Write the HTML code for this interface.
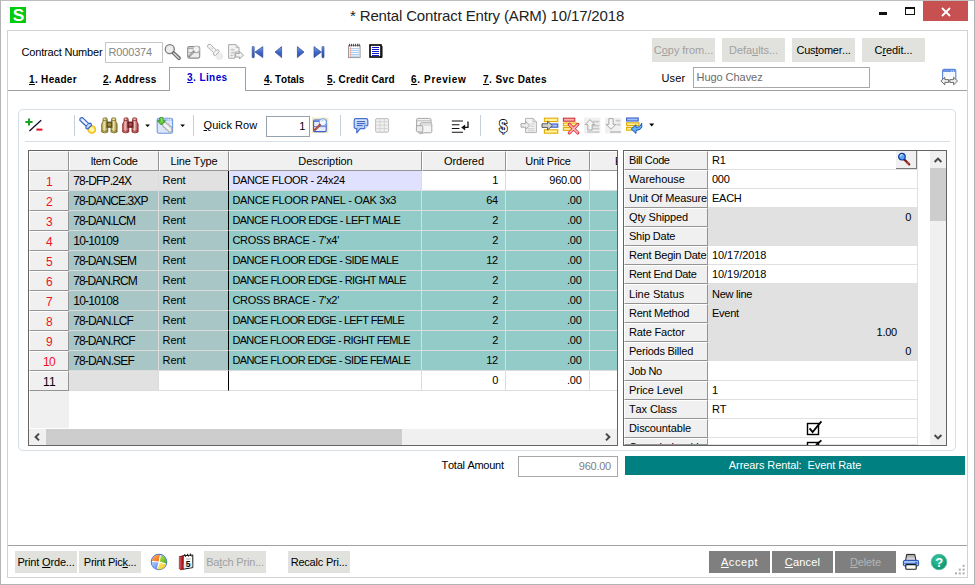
<!DOCTYPE html>
<html><head><meta charset="utf-8"><title>Rental Contract Entry</title>
<style>
*{box-sizing:border-box;margin:0;padding:0}
html,body{width:975px;height:585px;overflow:hidden;background:#fff}
body{font-family:"Liberation Sans",Arial,sans-serif;font-size:11px;letter-spacing:-0.25px;font-kerning:none;color:#000;position:relative}
.a{position:absolute}
.t{position:absolute;white-space:nowrap;line-height:14px;height:14px}
u{text-decoration:underline;text-underline-offset:1px}
#win{left:0;top:0;width:975px;height:585px;border:1px solid #b4b4b4;border-top-color:#bdbdbd}
#panel{left:7px;top:30px;width:961px;height:548px;border:1px solid #d2d2d2}
.btn{position:absolute;height:24px;background:#e1e2dd;text-align:center;line-height:25.5px;white-space:nowrap}
.dis{color:#a0a0a0}
.dbtn{position:absolute;height:22px;top:551px;background:#7f7f7f;color:#fff;text-align:center;line-height:23px}
.tab{position:absolute;top:73px;font-weight:bold;font-size:10px;white-space:nowrap;line-height:14px;letter-spacing:0.12px}
.inp{position:absolute;border:1px solid #c6c6c6;background:#fff;white-space:nowrap}
.hd{position:absolute;top:151px;height:20px;background:#f0f0f0;border-right:1px solid #949494;border-bottom:1px solid #949494;border-left:1px solid #fff;border-top:1px solid #fff;text-align:center;line-height:18px;white-space:nowrap;overflow:hidden}
.c{position:absolute;height:20px;border-right:1px solid #dcdcdc;border-bottom:1px solid #dcdcdc;line-height:19px;white-space:nowrap;overflow:hidden}
.rn{left:29px;width:40px;background:#f0f0f0;text-align:center;color:#f0101c;border-right:1px solid #949494;border-bottom:1px solid #949494;border-left:1px solid #fff;border-top:1px solid #fff;line-height:20px;font-size:12px;letter-spacing:-0.6px}
.ic{font-size:12px;line-height:20px}
.g1{background:#a9c6c6}.g2{background:#93cbc9}.gy{background:#e1e1e1}.lv{background:#e0e0ff}.w{background:#fff}
.r{text-align:right}
.pl{position:absolute;left:624px;width:84px;background:#f0f0f0;border-right:1px solid #949494;border-bottom:1px solid #949494;border-left:1px solid #fff;border-top:1px solid #fff;padding-left:4px;white-space:nowrap;overflow:hidden}
.pv{position:absolute;left:708px;width:210px;border-bottom:1px solid #e0e0e0;border-right:1px solid #e0e0e0;padding-left:4px;white-space:nowrap;overflow:hidden}
.vsep{position:absolute;top:115px;width:1px;height:21px;background:#c5d0da}
</style></head><body>
<div id="win" class="a"></div>
<!-- title bar -->
<div class="a" style="left:10px;top:7px;width:16px;height:16px;background:#00cb0c;color:#fff;font-weight:bold;font-size:16.5px;line-height:16.5px;text-align:center;overflow:hidden;letter-spacing:0;padding-left:1px"><span style="display:inline-block;transform:scaleX(1.05)">S</span></div>
<div class="t" id="title" style="left:350px;top:6px;font-size:15px;letter-spacing:-0.15px;line-height:20px;height:20px;color:#222">* Rental Contract Entry (ARM) 10/17/2018</div>
<div class="a" style="left:879px;top:12px;width:8px;height:3px;background:#111"></div>
<div class="a" style="left:905px;top:7px;width:10px;height:8px;border:1px solid #111;border-top-width:2px"></div>
<div class="a" style="left:923px;top:1px;width:45px;height:20px;background:#c75050"></div>
<svg class="a" style="left:941px;top:7px" width="10" height="10" viewBox="0 0 10 10"><path d="M1 1 L9 9 M9 1 L1 9" stroke="#fff" stroke-width="1.8" fill="none"/></svg>
<div id="panel" class="a"></div>

<div class="t" style="left:21.6px;top:45px"><span style="letter-spacing:-0.2px">Contract Number</span></div>
<div class="inp" style="left:105px;top:42px;width:58px;height:21px;color:#858585;line-height:19px;padding-left:2.5px"><span style="letter-spacing:-0.16px">R000374</span></div>
<div class="btn dis" style="left:652px;top:38px;width:63px"><span style="letter-spacing:-0.05px">C<u>o</u>py from...</span></div>
<div class="btn dis" style="left:722px;top:38px;width:63px"><span style="letter-spacing:-0.06px">Defa<u>u</u>lts...</span></div>
<div class="btn" style="left:792px;top:38px;width:63px"><span style="letter-spacing:-0.26px">Cus<u>t</u>omer...</span></div>
<div class="btn" style="left:862px;top:38px;width:63px"><span style="letter-spacing:-0.08px">C<u>r</u>edit...</span></div>
<div class="t" style="left:661.5px;top:71px"><span style="letter-spacing:0.13px">User</span></div>
<div class="inp" style="left:693px;top:67px;width:177px;height:21px;color:#6a6a6a;line-height:19px;padding-left:2.5px;border-color:#a8a8a8"><span style="letter-spacing:-0.05px">Hugo Chavez</span></div>

<div class="a" style="left:8px;top:90px;width:959px;height:1px;background:#a0a0a0"></div>
<div class="a" style="left:169px;top:67px;width:77px;height:24px;background:#fff;border:1px solid #a0a0a0;border-bottom:none"></div>
<div class="tab" style="left:29px"><span style="letter-spacing:0.32px"><u>1</u>. Header</span></div>
<div class="tab" style="left:103px"><span style="letter-spacing:0.25px"><u>2</u>. Address</span></div>
<div class="tab" style="left:187px;top:71px;color:#0000d0"><span style="letter-spacing:0.42px"><u>3</u>. Lines</span></div>
<div class="tab" style="left:264px"><span style="letter-spacing:-0.03px"><u>4</u>. Totals</span></div>
<div class="tab" style="left:327px"><span style="letter-spacing:0.16px"><u>5</u>. Credit Card</span></div>
<div class="tab" style="left:411px"><span style="letter-spacing:0.65px"><u>6</u>. Preview</span></div>
<div class="tab" style="left:483px"><span style="letter-spacing:0.43px"><u>7</u>. Svc Dates</span></div>

<div class="a" style="left:18px;top:109px;width:938px;height:342px;border:1px solid #d5dfe5;border-radius:5px"></div>
<div class="a" style="left:25px;top:141px;width:925px;height:1px;background:#d5dfe5"></div>
<div class="vsep" style="left:74px"></div><div class="vsep" style="left:193px"></div><div class="vsep" style="left:340px"></div><div class="vsep" style="left:480px"></div>
<div class="t" style="left:203.6px;top:118px"><span style="letter-spacing:0.04px"><u>Q</u>uick Row</span></div>
<div class="inp" style="left:266px;top:116px;width:44px;height:21px;line-height:19px;text-align:right;padding-right:4px;border-color:#98a2ad">1</div>

<div class="a" style="left:28px;top:150px;width:590px;height:296px;border:1px solid #646464;background:#fff"></div>
<div class="a" style="left:29px;top:151px;width:40px;height:277px;background:#f0f0f0;border-left:1px solid #fff"></div>
<div class="hd" style="left:29px;width:40px"></div>
<div class="hd" style="left:69px;width:90px"><span style="letter-spacing:-0.41px">Item Code</span></div>
<div class="hd" style="left:159px;width:70px"><span style="letter-spacing:-0.13px">Line Type</span></div>
<div class="hd" style="left:229px;width:193px"><span style="letter-spacing:-0.07px">Description</span></div>
<div class="hd" style="left:422px;width:84px"><span style="letter-spacing:-0.04px">Ordered</span></div>
<div class="hd" style="left:506px;width:84px"><span style="letter-spacing:-0.21px">Unit Price</span></div>
<div class="hd" style="left:590px;width:27px;border-right:none;text-align:left;padding-left:24px">E</div>
<div class="c rn" style="top:171px">1</div>
<div class="c ic gy" style="top:171px;left:69px;width:90px;padding-left:4.2px"><span style="letter-spacing:-0.8px">78-DFP.24X</span></div>
<div class="c gy" style="top:171px;left:159px;width:70px;padding-left:3.6px;border-right-color:#000"><span style="letter-spacing:-0.08px">Rent</span></div>
<div class="c lv" style="top:171px;left:229px;width:193px;padding-left:3.4px"><span style="letter-spacing:-0.36px">DANCE FLOOR - 24x24</span></div>
<div class="c w r" style="top:171px;left:422px;width:84px;padding-right:7px">1</div>
<div class="c w r" style="top:171px;left:506px;width:84px;padding-right:7.5px">960.00</div>
<div class="c w" style="top:171px;left:590px;width:27px;border-right:none"></div>
<div class="c rn" style="top:191px">2</div>
<div class="c ic g1" style="top:191px;left:69px;width:90px;padding-left:4.2px"><span style="letter-spacing:-0.92px">78-DANCE.3XP</span></div>
<div class="c g1" style="top:191px;left:159px;width:70px;padding-left:3.6px;border-right-color:#000"><span style="letter-spacing:-0.08px">Rent</span></div>
<div class="c g2" style="top:191px;left:229px;width:193px;padding-left:3.4px"><span style="letter-spacing:-0.32px">DANCE FLOOR PANEL - OAK 3x3</span></div>
<div class="c g2 r" style="top:191px;left:422px;width:84px;padding-right:7px">64</div>
<div class="c g2 r" style="top:191px;left:506px;width:84px;padding-right:7.5px">.00</div>
<div class="c g2" style="top:191px;left:590px;width:27px;border-right:none"></div>
<div class="c rn" style="top:211px">3</div>
<div class="c ic g1" style="top:211px;left:69px;width:90px;padding-left:4.2px"><span style="letter-spacing:-0.95px">78-DAN.LCM</span></div>
<div class="c g1" style="top:211px;left:159px;width:70px;padding-left:3.6px;border-right-color:#000"><span style="letter-spacing:-0.08px">Rent</span></div>
<div class="c g2" style="top:211px;left:229px;width:193px;padding-left:3.4px"><span style="letter-spacing:-0.55px">DANCE FLOOR EDGE - LEFT MALE</span></div>
<div class="c g2 r" style="top:211px;left:422px;width:84px;padding-right:7px">2</div>
<div class="c g2 r" style="top:211px;left:506px;width:84px;padding-right:7.5px">.00</div>
<div class="c g2" style="top:211px;left:590px;width:27px;border-right:none"></div>
<div class="c rn" style="top:231px">4</div>
<div class="c ic g1" style="top:231px;left:69px;width:90px;padding-left:4.2px"><span style="letter-spacing:-0.72px">10-10109</span></div>
<div class="c g1" style="top:231px;left:159px;width:70px;padding-left:3.6px;border-right-color:#000"><span style="letter-spacing:-0.08px">Rent</span></div>
<div class="c g2" style="top:231px;left:229px;width:193px;padding-left:3.4px"><span style="letter-spacing:-0.27px">CROSS BRACE - 7'x4'</span></div>
<div class="c g2 r" style="top:231px;left:422px;width:84px;padding-right:7px">2</div>
<div class="c g2 r" style="top:231px;left:506px;width:84px;padding-right:7.5px">.00</div>
<div class="c g2" style="top:231px;left:590px;width:27px;border-right:none"></div>
<div class="c rn" style="top:251px">5</div>
<div class="c ic g1" style="top:251px;left:69px;width:90px;padding-left:4.2px"><span style="letter-spacing:-0.92px">78-DAN.SEM</span></div>
<div class="c g1" style="top:251px;left:159px;width:70px;padding-left:3.6px;border-right-color:#000"><span style="letter-spacing:-0.08px">Rent</span></div>
<div class="c g2" style="top:251px;left:229px;width:193px;padding-left:3.4px"><span style="letter-spacing:-0.58px">DANCE FLOOR EDGE - SIDE MALE</span></div>
<div class="c g2 r" style="top:251px;left:422px;width:84px;padding-right:7px">12</div>
<div class="c g2 r" style="top:251px;left:506px;width:84px;padding-right:7.5px">.00</div>
<div class="c g2" style="top:251px;left:590px;width:27px;border-right:none"></div>
<div class="c rn" style="top:271px">6</div>
<div class="c ic g1" style="top:271px;left:69px;width:90px;padding-left:4.2px"><span style="letter-spacing:-0.98px">78-DAN.RCM</span></div>
<div class="c g1" style="top:271px;left:159px;width:70px;padding-left:3.6px;border-right-color:#000"><span style="letter-spacing:-0.08px">Rent</span></div>
<div class="c g2" style="top:271px;left:229px;width:193px;padding-left:3.4px"><span style="letter-spacing:-0.59px">DANCE FLOOR EDGE - RIGHT MALE</span></div>
<div class="c g2 r" style="top:271px;left:422px;width:84px;padding-right:7px">2</div>
<div class="c g2 r" style="top:271px;left:506px;width:84px;padding-right:7.5px">.00</div>
<div class="c g2" style="top:271px;left:590px;width:27px;border-right:none"></div>
<div class="c rn" style="top:291px">7</div>
<div class="c ic g1" style="top:291px;left:69px;width:90px;padding-left:4.2px"><span style="letter-spacing:-0.72px">10-10108</span></div>
<div class="c g1" style="top:291px;left:159px;width:70px;padding-left:3.6px;border-right-color:#000"><span style="letter-spacing:-0.08px">Rent</span></div>
<div class="c g2" style="top:291px;left:229px;width:193px;padding-left:3.4px"><span style="letter-spacing:-0.27px">CROSS BRACE - 7'x2'</span></div>
<div class="c g2 r" style="top:291px;left:422px;width:84px;padding-right:7px">2</div>
<div class="c g2 r" style="top:291px;left:506px;width:84px;padding-right:7.5px">.00</div>
<div class="c g2" style="top:291px;left:590px;width:27px;border-right:none"></div>
<div class="c rn" style="top:311px">8</div>
<div class="c ic g1" style="top:311px;left:69px;width:90px;padding-left:4.2px"><span style="letter-spacing:-0.88px">78-DAN.LCF</span></div>
<div class="c g1" style="top:311px;left:159px;width:70px;padding-left:3.6px;border-right-color:#000"><span style="letter-spacing:-0.08px">Rent</span></div>
<div class="c g2" style="top:311px;left:229px;width:193px;padding-left:3.4px"><span style="letter-spacing:-0.63px">DANCE FLOOR EDGE - LEFT FEMLE</span></div>
<div class="c g2 r" style="top:311px;left:422px;width:84px;padding-right:7px">2</div>
<div class="c g2 r" style="top:311px;left:506px;width:84px;padding-right:7.5px">.00</div>
<div class="c g2" style="top:311px;left:590px;width:27px;border-right:none"></div>
<div class="c rn" style="top:331px">9</div>
<div class="c ic g1" style="top:331px;left:69px;width:90px;padding-left:4.2px"><span style="letter-spacing:-0.93px">78-DAN.RCF</span></div>
<div class="c g1" style="top:331px;left:159px;width:70px;padding-left:3.6px;border-right-color:#000"><span style="letter-spacing:-0.08px">Rent</span></div>
<div class="c g2" style="top:331px;left:229px;width:193px;padding-left:3.4px"><span style="letter-spacing:-0.66px">DANCE FLOOR EDGE - RIGHT FEMLE</span></div>
<div class="c g2 r" style="top:331px;left:422px;width:84px;padding-right:7px">2</div>
<div class="c g2 r" style="top:331px;left:506px;width:84px;padding-right:7.5px">.00</div>
<div class="c g2" style="top:331px;left:590px;width:27px;border-right:none"></div>
<div class="c rn" style="top:351px">10</div>
<div class="c ic g1" style="top:351px;left:69px;width:90px;padding-left:4.2px"><span style="letter-spacing:-0.87px">78-DAN.SEF</span></div>
<div class="c g1" style="top:351px;left:159px;width:70px;padding-left:3.6px;border-right-color:#000"><span style="letter-spacing:-0.08px">Rent</span></div>
<div class="c g2" style="top:351px;left:229px;width:193px;padding-left:3.4px"><span style="letter-spacing:-0.61px">DANCE FLOOR EDGE - SIDE FEMALE</span></div>
<div class="c g2 r" style="top:351px;left:422px;width:84px;padding-right:7px">12</div>
<div class="c g2 r" style="top:351px;left:506px;width:84px;padding-right:7.5px">.00</div>
<div class="c g2" style="top:351px;left:590px;width:27px;border-right:none"></div>
<div class="c rn" style="top:371px;color:#000">11</div>
<div class="c ic gy" style="top:371px;left:69px;width:90px;padding-left:4.2px"></div>
<div class="c w" style="top:371px;left:159px;width:70px;padding-left:3.6px;border-right-color:#000"></div>
<div class="c w" style="top:371px;left:229px;width:193px;padding-left:3.4px"></div>
<div class="c w r" style="top:371px;left:422px;width:84px;padding-right:7px">0</div>
<div class="c w r" style="top:371px;left:506px;width:84px;padding-right:7.5px">.00</div>
<div class="c w" style="top:371px;left:590px;width:27px;border-right:none"></div>
<div class="a" style="left:29px;top:429px;width:588px;height:16px;background:#f0f0f0"></div>
<div class="a" style="left:46px;top:429px;width:356px;height:16px;background:#cdcdcd"></div>
<svg class="a" style="left:33px;top:432px" width="8" height="10" viewBox="0 0 8 10"><path d="M6 1.6 L2.6 5 L6 8.4" stroke="#484848" stroke-width="2" fill="none"/></svg>
<svg class="a" style="left:604px;top:432px" width="8" height="10" viewBox="0 0 8 10"><path d="M2 1.6 L5.4 5 L2 8.4" stroke="#484848" stroke-width="2" fill="none"/></svg>

<div class="a" style="left:623px;top:150px;width:324px;height:296px;border:1px solid #646464;background:#fff"></div>
<div class="pl" style="top:151px;height:19px;line-height:17px"><span style="letter-spacing:-0.38px">Bill Code</span></div>
<div class="pv w" style="top:151px;height:19px;line-height:19px;">R1</div>
<div class="pl" style="top:170px;height:19px;line-height:17px"><span style="letter-spacing:-0.04px">Warehouse</span></div>
<div class="pv w" style="top:170px;height:19px;line-height:19px;">000</div>
<div class="pl" style="top:189px;height:19px;line-height:17px"><span style="letter-spacing:-0.14px">Unit Of Measure</span></div>
<div class="pv w" style="top:189px;height:19px;line-height:19px;">EACH</div>
<div class="pl" style="top:208px;height:19px;line-height:17px"><span style="letter-spacing:-0.15px">Qty Shipped</span></div>
<div class="pv gy" style="top:208px;height:19px;line-height:19px;text-align:right;padding-right:6px;">0</div>
<div class="pl" style="top:227px;height:19px;line-height:17px"><span style="letter-spacing:-0.25px">Ship Date</span></div>
<div class="pv gy" style="top:227px;height:19px;line-height:19px;"></div>
<div class="pl" style="top:246px;height:19px;line-height:17px"><span style="letter-spacing:-0.23px">Rent Begin Date</span></div>
<div class="pv w" style="top:246px;height:19px;line-height:19px;"><span style="letter-spacing:-0.07px">10/17/2018</span></div>
<div class="pl" style="top:265px;height:19px;line-height:17px"><span style="letter-spacing:-0.36px">Rent End Date</span></div>
<div class="pv w" style="top:265px;height:19px;line-height:19px;"><span style="letter-spacing:-0.07px">10/19/2018</span></div>
<div class="pl" style="top:284px;height:20px;line-height:18px"><span style="letter-spacing:0.01px">Line Status</span></div>
<div class="pv gy" style="top:284px;height:20px;line-height:20px;">New line</div>
<div class="pl" style="top:304px;height:19px;line-height:17px"><span style="letter-spacing:-0.26px">Rent Method</span></div>
<div class="pv gy" style="top:304px;height:19px;line-height:19px;">Event</div>
<div class="pl" style="top:323px;height:19px;line-height:17px"><span style="letter-spacing:-0.16px">Rate Factor</span></div>
<div class="pv gy" style="top:323px;height:19px;line-height:19px;text-align:right;padding-right:20px;">1.00</div>
<div class="pl" style="top:342px;height:19px;line-height:17px"><span style="letter-spacing:-0.23px">Periods Billed</span></div>
<div class="pv gy" style="top:342px;height:19px;line-height:19px;text-align:right;padding-right:6px;">0</div>
<div class="pl" style="top:361px;height:20px;line-height:18px"><span style="letter-spacing:-0.35px">Job No</span></div>
<div class="pv w" style="top:361px;height:20px;line-height:20px;"></div>
<div class="pl" style="top:381px;height:19px;line-height:17px"><span style="letter-spacing:-0.06px">Price Level</span></div>
<div class="pv w" style="top:381px;height:19px;line-height:19px;">1</div>
<div class="pl" style="top:400px;height:19px;line-height:17px"><span style="letter-spacing:-0.12px">Tax Class</span></div>
<div class="pv w" style="top:400px;height:19px;line-height:19px;">RT</div>
<div class="pl" style="top:419px;height:19px;line-height:17px"><span style="letter-spacing:-0.13px">Discountable</span></div>
<div class="pv w" style="top:419px;height:19px;line-height:19px;"></div>
<div class="pl" style="top:438px;height:7px;line-height:17px"><span style="letter-spacing:-0.46px">Commissionable</span></div>
<div class="pv w" style="top:438px;height:7px;line-height:19px;"></div>
<div class="a" style="left:930px;top:151px;width:16px;height:294px;background:#f0f0f0"></div>
<div class="a" style="left:930px;top:168px;width:16px;height:53px;background:#cdcdcd"></div>
<svg class="a" style="left:933px;top:156px" width="10" height="8" viewBox="0 0 10 8"><path d="M1.6 6 L5 2.6 L8.4 6" stroke="#484848" stroke-width="2" fill="none"/></svg>
<svg class="a" style="left:933px;top:433px" width="10" height="8" viewBox="0 0 10 8"><path d="M1.6 2 L5 5.4 L8.4 2" stroke="#484848" stroke-width="2" fill="none"/></svg>

<div class="t" style="left:441.6px;top:458px"><span style="letter-spacing:-0.28px">Total Amount</span></div>
<div class="inp" style="left:518px;top:456px;width:100px;height:21px;line-height:19px;text-align:right;padding-right:6px;color:#808080;border-color:#a8a8a8">960.00</div>
<div class="a" style="left:625px;top:456px;width:340px;height:19px;background:#008080;color:#fff;text-align:center;line-height:19px;white-space:pre"><span style="letter-spacing:-0.08px">Arrears Rental:  Event Rate</span></div>

<div class="a" style="left:8px;top:545px;width:959px;height:1px;background:#a0a0a0"></div>
<div class="btn" style="left:15px;top:551px;width:62px;height:22px;line-height:23px"><span style="letter-spacing:-0.17px">Print <u>O</u>rde...</span></div>
<div class="btn" style="left:79px;top:551px;width:62px;height:22px;line-height:23px"><span style="letter-spacing:-0.25px">Print Pic<u>k</u>...</span></div>
<div class="btn dis" style="left:204px;top:551px;width:62px;height:22px;line-height:23px"><span style="letter-spacing:-0.18px">Ba<u>t</u>ch Prin...</span></div>
<div class="btn" style="left:288px;top:551px;width:62px;height:22px;line-height:23px"><span style="letter-spacing:-0.2px">Recalc Pri...</span></div>
<div class="dbtn" style="left:709px;width:61px"><span style="letter-spacing:0.59px"><u>A</u>ccept</span></div>
<div class="dbtn" style="left:772px;width:61px"><span style="letter-spacing:0.19px"><u>C</u>ancel</span></div>
<div class="dbtn" style="left:835px;width:61px;color:#b4b4b4"><span style="letter-spacing:-0.16px"><u>D</u>elete</span></div>

<!-- header toolbar icons -->
<svg class="a" style="left:164px;top:43px" width="18" height="18" viewBox="0 0 18 18">
<circle cx="5.8" cy="6.2" r="4.5" fill="#ededed" stroke="#7c7c7c" stroke-width="1.3"/>
<path d="M9.6 10 L15 15.2" stroke="#686868" stroke-width="3.8" stroke-linecap="round"/>
<path d="M9.8 10.2 L15 15.2" stroke="#d4d4d4" stroke-width="1.5" stroke-linecap="round"/>
</svg>
<svg class="a" style="left:186px;top:44px" width="16" height="16" viewBox="0 0 16 16">
<rect x="1.7" y="2.5" width="12" height="11.6" rx="1.6" fill="#ececec" stroke="#8a8a8a" stroke-width="1.1"/>
<path d="M2 4.2 H8" stroke="#8a8a8a" stroke-width="1"/>
<circle cx="10.3" cy="5.2" r="3.3" fill="#f2f2f2" stroke="#b0b0b0" stroke-width="0.9"/>
<path d="M2.5 8.6 H13.5" stroke="#a8a8a8" stroke-width="0.9"/>
<path d="M7.6 7.8 L3.2 12.4" stroke="#808080" stroke-width="2" stroke-linecap="round"/>
<path d="M7.6 7.8 L3.4 12.2" stroke="#e4e4e4" stroke-width="0.7"/>
</svg>
<svg class="a" style="left:206px;top:43px" width="19" height="19" viewBox="0 0 19 19">
<circle cx="13.4" cy="13.2" r="3.8" fill="#ececec"/>
<path d="M1.5 4 Q1 1 4.2 1.2 L10.2 7 L12.6 7 L13.2 8.8 L9.4 12.6 L7.6 12 L7.6 9.6 Z" fill="#f6f6f6" stroke="#b0b0b0" stroke-width="1" stroke-linejoin="round"/>
<path d="M10.4 7 L7.6 9.8" stroke="#b0b0b0" stroke-width="0.9"/>
<path d="M5 4.4 L7 6.4" stroke="#b8b8b8" stroke-width="0.9"/>
</svg>
<svg class="a" style="left:227px;top:43px" width="18" height="18" viewBox="0 0 18 18">
<path d="M1.6 1.6 H9 L12 4.6 V9 H8 V15.2 H1.6 Z" fill="#f3f3f3" stroke="#a8a8a8" stroke-width="1"/>
<path d="M9 1.6 V4.6 H12" fill="none" stroke="#b8b8b8" stroke-width="0.9"/>
<path d="M3.4 6.8 H8 M3.4 9.6 H7 M3.4 12.4 H6.6 M5.2 5.6 V8 M6.2 8.6 V10.8 M4.6 11.2 V13.4" stroke="#c2c2c2" stroke-width="0.9"/>
<path d="M8.6 10.4 H12.6 V8.4 L16.4 12.2 L12.6 16 V14 H8.6 Z" fill="#f0f0f0" stroke="#a4a4a4" stroke-width="1" stroke-linejoin="round"/>
</svg>
<svg class="a" style="left:250px;top:44px" width="78" height="16" viewBox="0 0 78 16">
<defs><linearGradient id="nb" x1="0" y1="0" x2="0" y2="1"><stop offset="0" stop-color="#8aa6e4"/><stop offset="0.5" stop-color="#3f68c6"/><stop offset="1" stop-color="#2d4fa8"/></linearGradient></defs>
<g fill="url(#nb)" stroke="#2c4a9c" stroke-width="0.7" stroke-linejoin="round">
<rect x="2.2" y="2.4" width="2" height="11.4" rx="0.8"/>
<path d="M12.8 2.6 V13.6 L5 8.1 Z"/>
<path d="M31.6 2.6 V13.6 L25 8.1 Z"/>
<path d="M47.4 2.6 V13.6 L54 8.1 Z"/>
<path d="M64 2.6 V13.6 L71.4 8.1 Z"/>
<rect x="72" y="2.4" width="2" height="11.4" rx="0.8"/>
</g></svg>
<svg class="a" style="left:347px;top:43px" width="16" height="16" viewBox="0 0 16 16">
<rect x="1.5" y="2.6" width="11.6" height="12" fill="#fdfdfd" stroke="#9a9a9a" stroke-width="1"/>
<path d="M2.6 0.8 V3.4 M4.6 0.8 V3.4 M6.6 0.8 V3.4 M8.6 0.8 V3.4 M10.6 0.8 V3.4 M12.2 0.8 V3.4" stroke="#303030" stroke-width="0.9"/>
<path d="M2.4 5.6 H12.4 M2.4 7.6 H12.4 M2.4 9.6 H12.4 M2.4 11.6 H12.4 M2.4 13.2 H12.4" stroke="#9cc4ea" stroke-width="0.9"/>
<path d="M3.6 4 V14" stroke="#f0a090" stroke-width="0.8"/>
</svg>
<svg class="a" style="left:368px;top:43px" width="16" height="16" viewBox="0 0 16 16">
<rect x="2" y="2" width="11" height="12" fill="#fff" stroke="#000" stroke-width="1.6"/>
<path d="M12.4 14.4 H14 V3" stroke="#000" stroke-width="1" fill="none"/>
<path d="M4 4.5 H11 M4 6.5 H11 M4 8.5 H11 M4 10.5 H11 M4 12.5 H11" stroke="#1418c8" stroke-width="1" shape-rendering="crispEdges"/>
</svg>
<!-- top right window icon -->
<svg class="a" style="left:940px;top:68px" width="18" height="18" viewBox="0 0 18 18">
<rect x="2.6" y="1.4" width="13.2" height="11" rx="1.4" fill="#f2f6fd" stroke="#5c86dc" stroke-width="1.1"/>
<path d="M3 1.9 H15.4 V4 H3 Z" fill="#6c94e4"/>
<rect x="11.2" y="2.5" width="1" height="0.9" fill="#fff"/><rect x="13" y="2.5" width="1" height="0.9" fill="#fff"/>
<rect x="3.4" y="8.6" width="11.6" height="6" fill="#fff"/>
<path d="M0.9 13 L4.8 9.2 V11.6 H8.6 V14.4 H4.8 V16.8 Z" fill="#f0f0f0" stroke="#5c5c5c" stroke-width="0.9" stroke-linejoin="round"/>
<path d="M17.5 13 L13.6 9.2 V11.6 H9.8 V14.4 H13.6 V16.8 Z" fill="#f0f0f0" stroke="#5c5c5c" stroke-width="0.9" stroke-linejoin="round"/>
</svg>
<!-- line toolbar icons -->
<svg class="a" style="left:24px;top:116px" width="20" height="18" viewBox="0 0 20 18">
<path d="M17.2 4.2 L5.4 15" stroke="#101030" stroke-width="1.3"/>
<path d="M1.4 6 H8.6 M5 2.4 V9.6" stroke="#18a020" stroke-width="2"/>
<path d="M12.4 13.6 H18.4" stroke="#e01020" stroke-width="2"/>
</svg>
<svg class="a" style="left:79px;top:116px" width="19" height="19" viewBox="0 0 19 19">
<defs><radialGradient id="yg"><stop offset="0" stop-color="#ffffe8"/><stop offset="0.55" stop-color="#fff080"/><stop offset="1" stop-color="#f8c010"/></radialGradient>
<linearGradient id="fb" x1="0" y1="1" x2="1" y2="0"><stop offset="0" stop-color="#6890dc"/><stop offset="0.5" stop-color="#d0e0fc"/><stop offset="1" stop-color="#7ca0e4"/></linearGradient></defs>
<circle cx="12.8" cy="13.5" r="3.8" fill="url(#yg)" stroke="#f0b818" stroke-width="1.1"/>
<path d="M0.9 4.4 Q0.4 1.4 3.6 1.6 L9.6 7.4 L12 7.4 L12.6 9.2 L8.8 13 L7 12.4 L7 10 Z" fill="url(#fb)" stroke="#3562c0" stroke-width="1.1" stroke-linejoin="round"/>
<path d="M9.8 7.4 L7 10.2" stroke="#3562c0" stroke-width="1"/>
<path d="M3.2 3.8 L7.2 7.8" stroke="#f4f8ff" stroke-width="1.3" stroke-linecap="round"/>
</svg>
<svg class="a" style="left:101px;top:117px" width="17" height="17" viewBox="0 0 17 17">
<defs><linearGradient id="ob" x1="0" y1="0" x2="1" y2="0"><stop offset="0" stop-color="#a89838"/><stop offset="0.4" stop-color="#f0e8b0"/><stop offset="1" stop-color="#8a7c2c"/></linearGradient></defs>
<path d="M2 2.2 Q2 0.9 3.2 0.9 H5 Q6.2 0.9 6.2 2.2 V4 L6.8 5.4 V15 Q3.8 16.8 0.7 15 V7 L2 4.4 Z" fill="url(#ob)" stroke="#7c7028" stroke-width="0.9" stroke-linejoin="round"/>
<path d="M14.8 2.2 Q14.8 0.9 13.6 0.9 H11.8 Q10.6 0.9 10.6 2.2 V4 L10 5.4 V15 Q13 16.8 16.1 15 V7 L14.8 4.4 Z" fill="url(#ob)" stroke="#7c7028" stroke-width="0.9" stroke-linejoin="round"/>
<rect x="5.4" y="4.6" width="6" height="6.2" fill="#5e5420"/>
<rect x="6.8" y="6" width="3.2" height="3.2" rx="1" fill="#9a8e44"/>
<path d="M2 3.6 H6.2 M10.6 3.6 H14.8 M0.9 13.6 Q3.8 15.2 6.6 13.6 M10.2 13.6 Q13 15.2 15.9 13.6" stroke="#7c7028" stroke-width="0.8" fill="none"/>
</svg>
<svg class="a" style="left:122px;top:117px" width="17" height="17" viewBox="0 0 17 17">
<defs><linearGradient id="rb" x1="0" y1="0" x2="1" y2="0"><stop offset="0" stop-color="#b04444"/><stop offset="0.4" stop-color="#f4c0c0"/><stop offset="1" stop-color="#943030"/></linearGradient></defs>
<path d="M2 2.2 Q2 0.9 3.2 0.9 H5 Q6.2 0.9 6.2 2.2 V4 L6.8 5.4 V15 Q3.8 16.8 0.7 15 V7 L2 4.4 Z" fill="url(#rb)" stroke="#8c2c2c" stroke-width="0.9" stroke-linejoin="round"/>
<path d="M14.8 2.2 Q14.8 0.9 13.6 0.9 H11.8 Q10.6 0.9 10.6 2.2 V4 L10 5.4 V15 Q13 16.8 16.1 15 V7 L14.8 4.4 Z" fill="url(#rb)" stroke="#8c2c2c" stroke-width="0.9" stroke-linejoin="round"/>
<rect x="5.4" y="4.6" width="6" height="6.2" fill="#6a2020"/>
<rect x="6.8" y="6" width="3.2" height="3.2" rx="1" fill="#a84c4c"/>
<path d="M2 3.6 H6.2 M10.6 3.6 H14.8 M0.9 13.6 Q3.8 15.2 6.6 13.6 M10.2 13.6 Q13 15.2 15.9 13.6" stroke="#8c2c2c" stroke-width="0.8" fill="none"/>
</svg>
<svg class="a" style="left:145px;top:124px" width="6" height="4" viewBox="0 0 6 4"><path d="M0.2 0.4 H5 L2.6 3 Z" fill="#000"/></svg>
<svg class="a" style="left:180px;top:124px" width="6" height="4" viewBox="0 0 6 4"><path d="M0.2 0.4 H5 L2.6 3 Z" fill="#000"/></svg>
<svg class="a" style="left:649px;top:123px" width="6" height="5" viewBox="0 0 6 5"><path d="M0.2 0.6 H5.2 L2.7 3.6 Z" fill="#000"/></svg>
<svg class="a" style="left:156px;top:117px" width="18" height="17" viewBox="0 0 18 17">
<rect x="1.2" y="1.2" width="15.4" height="15" rx="1.8" fill="#dbe6f8" stroke="#6e98e0" stroke-width="1.1"/>
<path d="M1.8 1.8 H16 V4 H1.8 Z" fill="#a8c4f0"/>
<rect x="11.6" y="2.4" width="1.2" height="1.1" fill="#fff"/><rect x="13.8" y="2.4" width="1.2" height="1.1" fill="#fff"/>
<path d="M7.4 5.4 L9.6 5 L11 7.2 L12.6 7 L13.6 9.4 L15.2 9.4 L16 12 L16 14 L13.6 15.8 L11.6 13 L10.2 13 L9 10.6 L7.6 10.4 L6.2 7.6 Z" fill="#e4e4e4" stroke="#9c9c9c" stroke-width="0.9" stroke-linejoin="round"/>
<path d="M8.4 7 L14.4 13.6" stroke="#fafafa" stroke-width="1.4"/>
<path d="M3.8 0.7 H7 V3.8 H9.4 L5.4 8 L1.4 3.8 H3.8 Z" fill="#62cc3c" stroke="#2c8c1c" stroke-width="0.9" stroke-linejoin="round"/>
<path d="M4.6 1.6 H6 V4.6" stroke="#b8f0a0" stroke-width="0.8" fill="none"/>
</svg>
<svg class="a" style="left:312px;top:117px" width="17" height="17" viewBox="0 0 17 17">
<rect x="0" y="0.6" width="16.4" height="15.6" fill="#efe6c4"/>
<rect x="1.6" y="3" width="12.6" height="11.6" rx="1.2" fill="#e6ecfb" stroke="#3c60c8" stroke-width="1.1"/>
<path d="M2 3.4 H13.8 V5 H2 Z" fill="#5c80dc"/>
<path d="M2 9.6 H14" stroke="#5c7cd4" stroke-width="0.9"/>
<circle cx="10.8" cy="5.2" r="3.5" fill="#f2f8ff" stroke="#78a8e8" stroke-width="1.1"/>
<path d="M9.4 4.4 Q10 3 11.6 3.2" stroke="#a8ccf4" stroke-width="1" fill="none"/>
<path d="M7.8 8 L3 12.8" stroke="#a03424" stroke-width="2.2" stroke-linecap="round"/>
<path d="M7.4 8.2 L3.2 12.4" stroke="#e8a090" stroke-width="0.7"/>
</svg>
<svg class="a" style="left:353px;top:117px" width="17" height="18" viewBox="0 0 17 18">
<defs><linearGradient id="cb" x1="0" y1="0" x2="0" y2="1"><stop offset="0" stop-color="#dce8fc"/><stop offset="1" stop-color="#a8c4f4"/></linearGradient></defs>
<path d="M3 1.6 H13 Q14.8 1.6 14.8 3.4 V8.2 L11.4 11.6 H7.2 L3.8 15.8 V11.6 H3 Q1.2 11.6 1.2 9.8 V3.4 Q1.2 1.6 3 1.6 Z" fill="url(#cb)" stroke="#4470cc" stroke-width="1.2" stroke-linejoin="round"/>
<path d="M14.6 8.4 H11.6 V11.4" fill="#f0f5fd" stroke="#4470cc" stroke-width="0.9"/>
<path d="M3.8 4.6 H12.2 M3.8 6.6 H12.2 M3.8 8.6 H9.6" stroke="#3860bc" stroke-width="1"/>
</svg>
<svg class="a" style="left:374px;top:117px" width="17" height="17" viewBox="0 0 17 17">
<rect x="1.6" y="1.6" width="13" height="13.6" rx="1.4" fill="#f1f1f1" stroke="#bcbcbc" stroke-width="1"/>
<path d="M1.6 4.8 H14.6 M1.6 8.2 H14.6 M1.6 11.6 H14.6 M6 1.6 V15 M10.4 1.6 V15" stroke="#d0d0d0" stroke-width="0.9"/>
</svg>
<svg class="a" style="left:415px;top:117px" width="18" height="18" viewBox="0 0 18 18">
<rect x="1.6" y="1.4" width="14.4" height="11" rx="1.4" fill="#f2f2f2" stroke="#a6a6a6" stroke-width="1"/>
<path d="M2 3.8 H16" stroke="#bcbcbc" stroke-width="1"/>
<rect x="5.4" y="5.8" width="11.4" height="10" rx="1.4" fill="#f4f4f4" stroke="#a6a6a6" stroke-width="1"/>
<path d="M6 8 H16.4" stroke="#c4c4c4" stroke-width="0.9"/>
<rect x="1.4" y="8.6" width="6.4" height="6.4" rx="1.6" fill="#ececec" stroke="#a6a6a6" stroke-width="1"/>
<path d="M4 15 V16.6 H8" stroke="#b0b0b0" stroke-width="0.9" fill="none"/>
</svg>
<svg class="a" style="left:451px;top:118px" width="19" height="16" viewBox="0 0 19 16">
<path d="M0.8 3 H12 M0.8 6.8 H8.4 M0.8 10.5 H8.4 M0.8 14.2 H12" stroke="#111" stroke-width="1.1"/>
<path d="M17 3.6 V9.4 H13" stroke="#111" stroke-width="1.3" fill="none"/>
<path d="M10.2 9.4 L14.2 6.4 V12.4 Z" fill="#111"/>
</svg>
<svg class="a" style="left:495px;top:115px" width="16" height="22" viewBox="0 0 16 22">
<g transform="translate(8.2 0) scale(0.84 1)">
<text x="0" y="17.2" text-anchor="middle" font-family="Liberation Sans, sans-serif" font-size="17" font-weight="bold" fill="#111" stroke="#111" stroke-width="1.9" stroke-linejoin="round" letter-spacing="0">$</text>
<text x="0" y="17.2" text-anchor="middle" font-family="Liberation Sans, sans-serif" font-size="17" font-weight="bold" fill="#fff" letter-spacing="0">$</text>
</g></svg>
<svg class="a" style="left:520px;top:117px" width="18" height="17" viewBox="0 0 18 17">
<path d="M5.6 1.4 H13 L16.4 4.8 V15.6 H5.6 Z" fill="#f4f4f4" stroke="#b4b4b4" stroke-width="1"/>
<path d="M13 1.4 V4.8 H16.4" fill="none" stroke="#b4b4b4" stroke-width="0.9"/>
<path d="M10.4 7 H14.6 M10.4 9.4 H14.6 M7.6 11.8 H14.6 M7.6 13.8 H14.6" stroke="#c4c4c4" stroke-width="0.9"/>
<path d="M1 6.6 H5.6 V4.4 L9.8 8.4 L5.6 12.4 V10.2 H1 Z" fill="#ececec" stroke="#a8a8a8" stroke-width="1" stroke-linejoin="round"/>
</svg>
<svg class="a" style="left:541px;top:117px" width="18" height="17" viewBox="0 0 18 17">
<rect x="3.4" y="1.2" width="13.4" height="3.4" fill="#fff3a0" stroke="#e2aa00" stroke-width="1.1"/>
<rect x="3.4" y="12.8" width="13.4" height="3.4" fill="#fff3a0" stroke="#e2aa00" stroke-width="1.1"/>
<rect x="9.6" y="7" width="7.2" height="3.2" fill="#a4c0f8" stroke="#3860c8" stroke-width="1.1"/>
<path d="M1 6.8 H6.6 V4.2 L11.4 8.6 L6.6 13 V10.4 H1 Z" fill="#d0d0d0" stroke="#5a5a5a" stroke-width="1" stroke-linejoin="round"/>
</svg>
<svg class="a" style="left:562px;top:117px" width="18" height="18" viewBox="0 0 18 18">
<rect x="1.4" y="1.2" width="11.4" height="3" fill="#f8b0b0" stroke="#d03434" stroke-width="1.1"/>
<rect x="1.4" y="6" width="13" height="2.8" fill="#fff3a0" stroke="#e2aa00" stroke-width="1.1"/>
<rect x="1.4" y="10.6" width="8" height="2.8" fill="#fff3a0" stroke="#e2aa00" stroke-width="1.1"/>
<path d="M7.4 7.4 L15.8 15.8 M15.8 7.4 L7.4 15.8" stroke="#d83444" stroke-width="3.2" stroke-linecap="round"/>
<path d="M7.6 7.6 L15.6 15.6 M15.6 7.6 L7.6 15.6" stroke="#fbb4b8" stroke-width="1.5" stroke-linecap="round"/>
</svg>
<svg class="a" style="left:584px;top:117px" width="17" height="17" viewBox="0 0 17 17">
<rect x="0" y="0.6" width="16.4" height="16" fill="#f1f1f1"/>
<path d="M8.6 4.6 H15.4 M8.6 8.6 H15.4 M3 15 H15.4 M8.6 11.6 H15.4" stroke="#c8c8c8" stroke-width="1.6"/>
<path d="M6 2.6 L10.8 7.6 H8.2 V13 H3.8 V7.6 H1.2 Z" fill="#f4f4f4" stroke="#a8a8a8" stroke-width="1" stroke-linejoin="round"/>
</svg>
<svg class="a" style="left:605px;top:117px" width="17" height="17" viewBox="0 0 17 17">
<rect x="0" y="0.6" width="16.4" height="16" fill="#f1f1f1"/>
<path d="M10.6 3.6 H15.4 M11.6 7.6 H15.4 M5 15 H15.8" stroke="#c8c8c8" stroke-width="1.8"/>
<path d="M3.8 1.6 H8.2 V7.4 H10.8 L6 12.4 L1.2 7.4 H3.8 Z" fill="#f4f4f4" stroke="#a8a8a8" stroke-width="1" stroke-linejoin="round"/>
</svg>
<svg class="a" style="left:625px;top:117px" width="19" height="18" viewBox="0 0 19 18">
<rect x="1.6" y="1" width="11.6" height="3" fill="#a4c0f8" stroke="#3860c8" stroke-width="1.1"/>
<rect x="1.6" y="5.8" width="12.4" height="2.8" fill="#fff3a0" stroke="#e2aa00" stroke-width="1.1"/>
<rect x="1.6" y="10.4" width="8" height="2.8" fill="#fff3a0" stroke="#e2aa00" stroke-width="1.1"/>
<path d="M16.6 6.2 Q18.2 13 11 13.4 V16.4 L6.2 12 L11 7.8 V10.4 Q15.4 10.4 16.6 6.2 Z" fill="#62b4f4" stroke="#1c54b8" stroke-width="1" stroke-linejoin="round"/>
</svg>
<!-- bill code lookup button -->
<div class="a" style="left:896px;top:151px;width:21px;height:18px;background:#f0f0f0;border-right:1px solid #7a7a7a;border-bottom:1px solid #7a7a7a"></div>
<svg class="a" style="left:897px;top:152px" width="16" height="16" viewBox="0 0 16 16">
<path d="M7.6 7.8 L12.2 12.4" stroke="#7c1c14" stroke-width="2.2" stroke-linecap="round"/>
<path d="M10.4 9.6 L11.4 12.6 M9.4 10.8 L12.6 11.2" stroke="#c05848" stroke-width="0.8"/>
<circle cx="4.9" cy="4.7" r="3.3" fill="#5aa8f4" stroke="#14389c" stroke-width="1.2"/>
<path d="M3.2 4.4 Q3.6 2.6 5.6 2.8" stroke="#dcf0ff" stroke-width="1.1" fill="none"/>
</svg>
<!-- checkboxes -->
<svg class="a" style="left:806px;top:420px" width="18" height="17" viewBox="0 0 18 17">
<rect x="1.5" y="3.5" width="11" height="11" fill="#fff" stroke="#000" stroke-width="1.4"/>
<path d="M3.6 8.4 L6.6 12 L15.4 1.4" stroke="#000" stroke-width="1.8" fill="none"/>
</svg>
<svg class="a" style="left:806px;top:439px" width="18" height="6" viewBox="0 0 18 6">
<rect x="1.5" y="3.5" width="11" height="11" fill="#fff" stroke="#000" stroke-width="1.4"/>
<path d="M10 6 L15.4 1.4" stroke="#000" stroke-width="1.8" fill="none"/>
</svg>
<!-- bottom icons -->
<svg class="a" style="left:150px;top:553px" width="18" height="18" viewBox="0 0 18 18">
<defs><linearGradient id="p1" x1="0" y1="0" x2="1" y2="1"><stop offset="0" stop-color="#ffb060"/><stop offset="1" stop-color="#f06c10"/></linearGradient>
<linearGradient id="p2" x1="0" y1="0" x2="1" y2="1"><stop offset="0" stop-color="#b8e060"/><stop offset="1" stop-color="#5cae10"/></linearGradient>
<linearGradient id="p3" x1="0" y1="0" x2="1" y2="1"><stop offset="0" stop-color="#b8d0fc"/><stop offset="1" stop-color="#5888ec"/></linearGradient>
<linearGradient id="p4" x1="0" y1="0" x2="1" y2="1"><stop offset="0" stop-color="#fff080"/><stop offset="1" stop-color="#f0c010"/></linearGradient></defs>
<circle cx="9" cy="9" r="7.7" fill="#fff" stroke="#4a78d0" stroke-width="1.2"/>
<path d="M10 1.7 A7.3 7.3 0 0 0 1.8 7.8 L8.6 8.4 Z" fill="url(#p1)"/>
<path d="M11 1.9 A7.3 7.3 0 0 1 16.3 10.4 L9.7 8.6 Z" fill="url(#p2)"/>
<path d="M1.7 8.8 A7.3 7.3 0 0 0 6.8 16 L8.4 9.4 Z" fill="url(#p3)"/>
<path d="M7.8 16.3 A7.3 7.3 0 0 0 16 11.4 L9.5 9.6 Z" fill="url(#p4)"/>
</svg>
<svg class="a" style="left:178px;top:553px" width="17" height="18" viewBox="0 0 17 18">
<path d="M5 2.8 L14.8 2 V14.6 L5 16.2 Z" fill="#fff" stroke="#111" stroke-width="1"/>
<path d="M5.6 11 L14.2 9.8 V14 L5.6 15.4 Z" fill="#dce8f8"/>
<path d="M1.4 3.6 L5 2.8 V16.2 L2.6 16.8 L1.4 15.6 Z" fill="#d42020" stroke="#6c1010" stroke-width="0.8"/>
<path d="M1.9 4 V15.4" stroke="#8cb0e0" stroke-width="0.7"/>
<path d="M6.8 1 Q6.2 3 7.8 3.8 M9.6 0.8 Q9 2.8 10.6 3.6 M12.4 0.6 Q11.8 2.6 13.4 3.4" stroke="#111" stroke-width="1" fill="none"/>
<path d="M8 6 H12.6" stroke="#b0b0b0" stroke-width="1"/>
<text x="10.2" y="14" text-anchor="middle" font-family="Liberation Sans, sans-serif" font-size="8.5" font-weight="bold" fill="#000" letter-spacing="0">5</text>
</svg>
<svg class="a" style="left:902px;top:553px" width="18" height="18" viewBox="0 0 18 18">
<defs><linearGradient id="pg" x1="0" y1="0" x2="0" y2="1"><stop offset="0" stop-color="#9a9a9a"/><stop offset="1" stop-color="#f4f4f4"/></linearGradient></defs>
<path d="M4.6 1.4 H12.8 L14 8 H3.6 Z" fill="url(#pg)" stroke="#202020" stroke-width="1"/>
<rect x="1.4" y="7.4" width="15.2" height="5.6" rx="1.6" fill="#a8c8f4" stroke="#2c58b8" stroke-width="1.1"/>
<path d="M2.4 10.4 H15.6" stroke="#3868c8" stroke-width="1"/>
<rect x="3.8" y="11.6" width="10.4" height="4.6" rx="0.8" fill="#fff" stroke="#181818" stroke-width="1.1"/>
<rect x="13.4" y="8.8" width="1.4" height="1" fill="#1c3c90"/>
</svg>
<svg class="a" style="left:930px;top:553px" width="18" height="18" viewBox="0 0 18 18">
<defs><radialGradient id="hg" cx="0.4" cy="0.35" r="0.7"><stop offset="0" stop-color="#38c8a0"/><stop offset="1" stop-color="#089070"/></radialGradient></defs>
<circle cx="9" cy="9" r="7.8" fill="url(#hg)" stroke="#58c0a0" stroke-width="0.8"/>
<text x="9" y="13.6" text-anchor="middle" font-family="Liberation Sans, sans-serif" font-size="13" font-weight="bold" fill="#fff">?</text>
</svg>
<svg class="a" style="left:954px;top:564px" width="12" height="12" viewBox="0 0 12 12">
<g fill="#adadad"><rect x="8.6" y="0.8" width="2" height="2"/><rect x="4.8" y="4.6" width="2" height="2"/><rect x="8.6" y="4.6" width="2" height="2"/><rect x="1" y="8.4" width="2" height="2"/><rect x="4.8" y="8.4" width="2" height="2"/><rect x="8.6" y="8.4" width="2" height="2"/></g>
</svg>

</body></html>
